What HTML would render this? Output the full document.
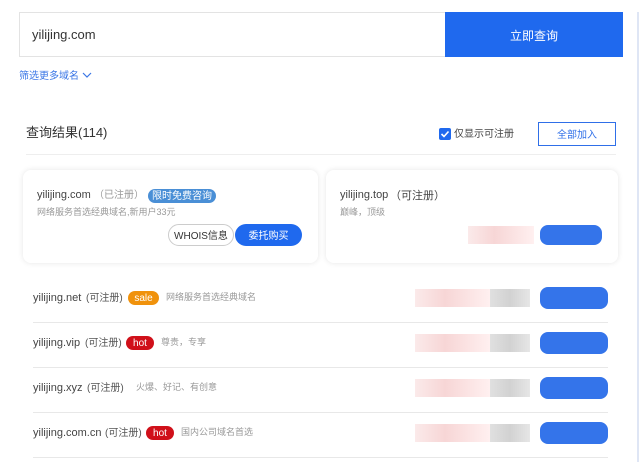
<!DOCTYPE html><html><head><meta charset="utf-8"><style>
*{margin:0;padding:0;box-sizing:border-box}
body{width:640px;height:462px;background:#fff;font-family:"Liberation Sans","Noto Sans CJK SC",sans-serif;position:relative;overflow:hidden;color:#333}
.a{position:absolute;white-space:nowrap;line-height:1.2}
.c{display:flex;align-items:center;justify-content:center;line-height:1;padding-top:3px}
.p{position:absolute;white-space:nowrap;font-size:10px;line-height:12px;color:#555}
.tag{position:absolute;height:14px;border-radius:7px;color:#fff;font-size:10px;line-height:1;display:flex;align-items:center;justify-content:center;padding-top:1px}
.div{position:absolute;left:33px;width:575px;height:1px;background:#e8e8e8}
.pk{position:absolute;background:linear-gradient(90deg,#fbeaea,#f7d6d6 40%,#fbe3e3 70%,#fff0f0);height:18px}
.gr{position:absolute;background:linear-gradient(90deg,#e0e0e0,#d2d2d2,#e6e6e6);height:18px}
.bl{position:absolute;background:#3474ea;height:22px;border-radius:8px}
</style></head><body>
<div class="a" style="left:19px;top:12px;width:427px;height:45px;border:1px solid #e3e3e3"></div>
<div class="a" style="left:32px;top:27px;font-size:13px">yilijing.com</div>
<div class="a c" style="left:445px;top:12px;width:178px;height:45px;background:#1f69ee;color:#fff;font-size:12px">立即查询</div>
<div class="a" style="left:637px;top:12px;width:2px;height:450px;background:#dfe6f5"></div>
<div class="a" style="left:19px;top:71px;font-size:10px;color:#3a76e6">筛选更多域名 <svg width="10" height="7" viewBox="0 0 10 7"><path d="M1 1l4 4 4-4" fill="none" stroke="#3a76e6" stroke-width="1.2"/></svg></div>
<div class="a" style="left:26px;top:125px;font-size:13px;color:#333">查询结果(114)</div>
<div class="a" style="left:439px;top:128px;width:12px;height:12px;background:#1f69ee;border-radius:2px"><svg width="12" height="12" viewBox="0 0 12 12" style="display:block"><path d="M2.5 6l2.5 2.5 4.5-5" fill="none" stroke="#fff" stroke-width="1.6"/></svg></div>
<div class="a" style="left:454px;top:129px;font-size:10px;color:#444">仅显示可注册</div>
<div class="a c" style="left:538px;top:122px;width:78px;height:24px;border:1px solid #2f6fe8;color:#2f6fe8;font-size:10px">全部加入</div>
<div class="a" style="left:26px;top:154px;width:590px;height:1px;background:#eee"></div>
<div class="a" style="left:23px;top:170px;width:295px;height:93px;border-radius:8px;box-shadow:0 0 6px rgba(0,0,0,.1)"></div>
<div class="a" style="left:326px;top:170px;width:292px;height:93px;border-radius:8px;box-shadow:0 0 6px rgba(0,0,0,.1)"></div>
<div class="a" style="left:37px;top:189px;font-size:11px;color:#444">yilijing.com</div>
<div class="p" style="left:94px;top:190px;color:#999">（已注册）</div>
<div class="tag" style="left:148px;top:189px;width:68px;background:#4a8fd6">限时免费咨询</div>
<div class="a" style="left:37px;top:207px;font-size:9px;color:#999">网络服务首选经典域名,新用户33元</div>
<div class="a c" style="left:168px;top:224px;width:66px;height:22px;border:1px solid #ccc;border-radius:11px;font-size:10px">WHOIS信息</div>
<div class="a c" style="left:235px;top:224px;width:67px;height:22px;background:#1f69ee;border-radius:11px;color:#fff;font-size:10px">委托购买</div>
<div class="a" style="left:340px;top:189px;font-size:11px;color:#444">yilijing.top</div>
<div class="p" style="left:390px;top:190px;font-size:11px;color:#444">（可注册）</div>
<div class="a" style="left:340px;top:207px;font-size:9px;color:#999">巅峰，顶级</div>
<div class="pk" style="left:468px;top:226px;width:66px"></div>
<div class="bl" style="left:540px;top:225px;width:62px;height:20px"></div>

<div class="a" style="left:33px;top:292px;font-size:11px;color:#444">yilijing.net</div>
<div class="p" style="left:86px;top:293px">(可注册)</div>
<div class="tag" style="left:128px;top:291px;width:31px;background:#f0920c">sale</div>
<div class="a" style="left:166px;top:292px;font-size:9px;color:#999">网络服务首选经典域名</div>
<div class="div" style="top:322px"></div>
<div class="a" style="left:33px;top:337px;font-size:11px;color:#444">yilijing.vip</div>
<div class="p" style="left:85px;top:338px">(可注册)</div>
<div class="tag" style="left:126px;top:336px;width:28px;background:#d0101a">hot</div>
<div class="a" style="left:161px;top:337px;font-size:9px;color:#999">尊贵，专享</div>
<div class="div" style="top:367px"></div>
<div class="a" style="left:33px;top:382px;font-size:11px;color:#444">yilijing.xyz</div>
<div class="p" style="left:87px;top:383px">(可注册)</div>
<div class="a" style="left:136px;top:382px;font-size:9px;color:#999">火爆、好记、有创意</div>
<div class="div" style="top:412px"></div>
<div class="a" style="left:33px;top:427px;font-size:11px;color:#444">yilijing.com.cn</div>
<div class="p" style="left:105px;top:428px">(可注册)</div>
<div class="tag" style="left:146px;top:426px;width:28px;background:#d0101a">hot</div>
<div class="a" style="left:181px;top:427px;font-size:9px;color:#999">国内公司域名首选</div>
<div class="div" style="top:457px"></div>
<div class="pk" style="left:415px;top:289px;width:75px"></div><div class="gr" style="left:490px;top:289px;width:40px"></div><div class="bl" style="left:540px;top:287px;width:68px"></div>
<div class="pk" style="left:415px;top:334px;width:75px"></div><div class="gr" style="left:490px;top:334px;width:40px"></div><div class="bl" style="left:540px;top:332px;width:68px"></div>
<div class="pk" style="left:415px;top:379px;width:75px"></div><div class="gr" style="left:490px;top:379px;width:40px"></div><div class="bl" style="left:540px;top:377px;width:68px"></div>
<div class="pk" style="left:415px;top:424px;width:75px"></div><div class="gr" style="left:490px;top:424px;width:40px"></div><div class="bl" style="left:540px;top:422px;width:68px"></div>
</body></html>
